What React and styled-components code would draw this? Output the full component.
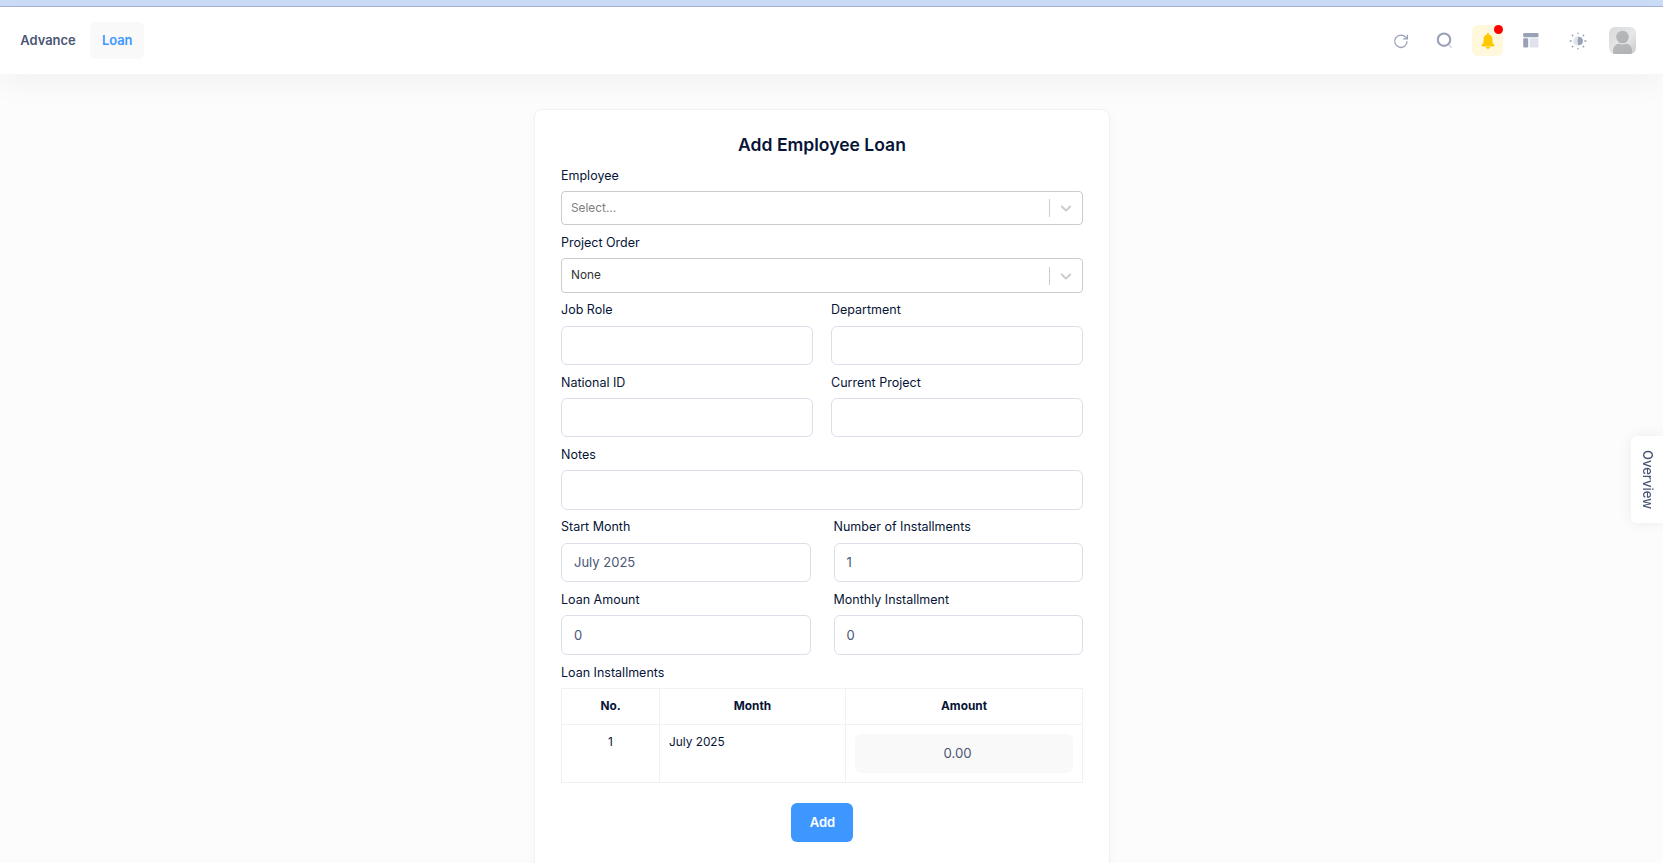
import React from "react";
import styled, { createGlobalStyle } from "styled-components";

const Global = createGlobalStyle`
  *, *::before, *::after { box-sizing: border-box; }
  html, body { margin: 0; height: 100%; overflow: hidden; }
  body {
    background: #fcfcfc;
    color: #071437;
    font-family: Inter, "Liberation Sans", sans-serif;
    font-size: 13px;
  }
  #root { height: 100%; }
`;

const Page = styled.div`
  display: flex;
  flex-direction: column;
  height: 100vh;
  overflow: hidden;
`;

const WindowEdge = styled.div`
  flex: none;
  height: 7px;
  background: #cbdcf6;
  border-bottom: 1px solid #a5b3d2;
`;

const Header = styled.header`
  flex: none;
  display: flex;
  align-items: center;
  justify-content: space-between;
  height: 67px;
  padding: 0 27px 0 6px;
  background: #fff;
  box-shadow: 0 10px 30px rgba(0, 0, 0, 0.045);
`;

const Nav = styled.nav`
  display: flex;
  gap: 2.8px;
  padding-left: 2.6px;
`;

const NavLink = styled.a`
  display: flex;
  align-items: center;
  height: 37px;
  padding: 0 11.7px 1px;
  border-radius: 6px;
  background: ${(p) => (p.$active ? "#f9f9f9" : "transparent")};
  color: ${(p) => (p.$active ? "#3e97ff" : "#4b5675")};
  font-size: 12.95px;
  font-weight: 600;
`;

const Tools = styled.div`
  display: flex;
  align-items: center;
`;

const Tool = styled.div`
  position: relative;
  display: flex;
  align-items: center;
  justify-content: center;
  width: 31px;
  height: 31px;
  margin-right: ${(p) => p.$gap}px;
  border-radius: 6px;
  background: ${(p) => (p.$highlight ? "#fff8dd" : "transparent")};
`;

const AlertDot = styled.span`
  position: absolute;
  top: 0;
  right: 0;
  width: 9px;
  height: 9px;
  border-radius: 50%;
  background: #f00;
`;

const Avatar = styled.svg`
  display: block;
  width: 27px;
  height: 27px;
  border-radius: 6px;
`;

const Main = styled.main`
  flex: 1;
  display: flex;
  justify-content: center;
  align-items: flex-start;
  padding: 35px 19px 0 0;
`;

const Card = styled.form`
  flex: none;
  width: 576px;
  height: 760px;
  padding: 20px 26px;
  border: 1px solid #f1f1f2;
  border-radius: 8px;
  background: #fff;
  box-shadow: 0 3px 12px rgba(0, 0, 0, 0.03);
`;

const Title = styled.h1`
  margin: 0;
  height: 28.1px;
  font-size: 17.55px;
  font-weight: 600;
  line-height: 30px;
  text-align: center;
`;

const Row = styled.div`
  display: grid;
  grid-template-columns: 1fr 1fr;
  column-gap: ${(p) => p.$gap}px;
`;

const Label = styled.label`
  display: block;
  height: 33px;
  padding-top: 0.6px;
  line-height: 34px;
  font-size: 12.5px;
  font-weight: 400;
`;

const SelectBox = styled.div`
  display: flex;
  align-items: center;
  height: 34.35px;
  padding-left: 9px;
  border: 1px solid #ccc;
  border-radius: 4px;
  color: ${(p) => (p.$placeholder ? "#808080" : "#333")};
  font-size: 11.85px;
`;

const SelectText = styled.span`
  flex: 1;
  margin-top: -1.5px;
`;

const Divider = styled.span`
  width: 1px;
  height: 18px;
  background: #ccc;
`;

const ChevronIcon = styled.svg`
  display: block;
  width: 18px;
  height: 18px;
  margin: 0 7px;
  fill: #ccc;
`;

const Input = styled.div`
  display: flex;
  align-items: center;
  height: ${(p) => p.$height || 39.3}px;
  padding: 0 12px;
  border: 1px solid #dbdfe9;
  border-radius: 6px;
  color: #4b5675;
  font-size: 13px;
`;

const Table = styled.table`
  width: 522px;
  border-collapse: collapse;
  table-layout: fixed;
  font-size: 11.85px;
`;

const Th = styled.th`
  height: 36px;
  padding: 0;
  border: 1px solid #f1f1f2;
  width: ${(p) => p.$width};
  font-weight: 700;
  text-align: center;
`;

const Td = styled.td`
  height: 58px;
  padding: 9px;
  border: 1px solid #f1f1f2;
  line-height: 16px;
  text-align: ${(p) => p.$align || "left"};
  vertical-align: top;
`;

const Amount = styled.div`
  height: 39px;
  padding-right: 13px;
  border-radius: 6px;
  background: #f9f9f9;
  color: #4b5675;
  font-size: 13.2px;
  line-height: 39px;
  text-align: center;
`;

const Actions = styled.div`
  display: flex;
  justify-content: center;
  padding-top: 20px;
`;

const AddButton = styled.button`
  width: 62px;
  height: 39px;
  padding: 0 0 0 1px;
  border: 0;
  border-radius: 6px;
  background: #3e97ff;
  color: #fff;
  font: 600 13px Inter, "Liberation Sans", sans-serif;
`;

const OverviewTab = styled.aside`
  position: fixed;
  right: 0;
  top: 436px;
  display: flex;
  align-items: center;
  justify-content: center;
  width: 32px;
  height: 87px;
  padding: 1px 0 0 1px;
  border-radius: 6px 0 0 6px;
  background: #fff;
  box-shadow: 0 0 14px rgba(0, 0, 0, 0.07);
  color: #4b5675;
  font-size: 13px;
  font-weight: 500;
  writing-mode: vertical-rl;
`;

function RefreshIcon() {
  return (
    <svg width="16" height="16" viewBox="0 0 16 16" fill="none" stroke="#99a1b7" strokeWidth="1.3">
      <path d="M14.1 8.3A6.2 6.2 0 1 1 12.6 4.2L14 5.5" />
      <path d="M14.4 1.7V5.9H10.1" />
    </svg>
  );
}

function SearchIcon() {
  return (
    <svg width="17" height="17" viewBox="0 0 17 17" fill="none">
      <path d="M13.2 13.2L15.4 15.4" stroke="#dcdfe8" strokeWidth="2" strokeLinecap="round" />
      <circle cx="8" cy="7.7" r="6.2" stroke="#99a1b7" strokeWidth="2.1" />
    </svg>
  );
}

function BellIcon() {
  return (
    <svg width="14" height="16" viewBox="0 0 14 16" fill="#ffc700">
      <path d="M7 0C7.7 0 8.1.5 8.1 1.1V1.7C10.3 2.2 11.4 3.9 11.4 6V8.5C11.4 10 12.4 10.6 13.1 11.8C13.7 12.8 13.3 13.5 12.4 13.5H1.6C.7 13.5.3 12.8.9 11.8C1.6 10.6 2.6 10 2.6 8.5V6C2.6 3.9 3.7 2.2 5.9 1.7V1.1C5.9.5 6.3 0 7 0Z" />
      <path d="M4.9 14H9.1C8.8 15.1 8 15.9 7 15.9S5.2 15.1 4.9 14Z" />
    </svg>
  );
}

function LayoutIcon() {
  return (
    <svg width="16" height="15" viewBox="0 0 16 15">
      <rect x="0.2" y="0" width="15.3" height="4.3" rx="1" fill="#99a1b7" />
      <rect x="0.2" y="5.2" width="5" height="9.4" rx="1" fill="#99a1b7" />
      <rect x="6.7" y="5.2" width="8.8" height="9.4" rx="1" fill="#dfe2ea" />
    </svg>
  );
}

function SunIcon() {
  return (
    <svg width="18" height="18" viewBox="0 0 18 18">
      <circle cx="9" cy="9" r="4.7" fill="#dfe2ea" />
      <path d="M9.2 5.1H10A3.9 3.9 0 0 1 10 12.9H9.2Q8 9 9.2 5.1Z" fill="#99a1b7" />
      <g stroke="#99a1b7" strokeWidth="1.5" strokeLinecap="round">
        <path d="M9 1.2V1.6M9 16.4V16.8M1.2 9H2.1M15.9 9H16.8M3.4 3.4L3.8 3.8M14.2 14.2L14.6 14.6M3.4 14.6L3.8 14.2M14.2 3.8L14.6 3.4" />
      </g>
    </svg>
  );
}

function UserAvatar() {
  return (
    <Avatar viewBox="0 0 27 27">
      <defs>
        <linearGradient id="back" x1="0" y1="0" x2="1" y2="1">
          <stop offset="0" stopColor="#d9dadb" />
          <stop offset="0.55" stopColor="#e6e7e8" />
          <stop offset="1" stopColor="#c9cbcc" />
        </linearGradient>
        <linearGradient id="person" x1="0" y1="0" x2="1" y2="1">
          <stop offset="0" stopColor="#b8b9ba" />
          <stop offset="1" stopColor="#b0b2b3" />
        </linearGradient>
      </defs>
      <rect width="27" height="27" fill="url(#back)" />
      <circle cx="13.5" cy="10" r="6.3" fill="url(#person)" />
      <path d="M4 27V24C4 19.5 7 16.8 10.3 16.8Q13.5 18 16.8 16.8C20.2 16.8 23 19.5 23 24V27Z" fill="url(#person)" />
    </Avatar>
  );
}

function Select({ label, value, placeholder }) {
  return (
    <div>
      <Label>{label}</Label>
      <SelectBox $placeholder={placeholder}>
        <SelectText>{value}</SelectText>
        <Divider />
        <ChevronIcon viewBox="0 0 20 20">
          <path d="M4.516 7.548c0.436-0.446 1.043-0.481 1.576 0l3.908 3.747 3.908-3.747c0.533-0.481 1.141-0.446 1.574 0 0.436 0.445 0.408 1.197 0 1.615-0.406 0.418-4.695 4.502-4.695 4.502-0.217 0.223-0.502 0.335-0.787 0.335s-0.57-0.112-0.789-0.335c0 0-4.287-4.084-4.695-4.502s-0.436-1.17 0-1.615z" />
        </ChevronIcon>
      </SelectBox>
    </div>
  );
}

function Field({ label, value, height }) {
  return (
    <div>
      <Label>{label}</Label>
      <Input $height={height}>{value}</Input>
    </div>
  );
}

export default function App() {
  return (
    <Page>
      <Global />
      <WindowEdge />
      <Header>
        <Nav>
          <NavLink>Advance</NavLink>
          <NavLink $active>Loan</NavLink>
        </Nav>
        <Tools>
          <Tool $gap={12}><RefreshIcon /></Tool>
          <Tool $gap={12.5}><SearchIcon /></Tool>
          <Tool $gap={12} $highlight><BellIcon /><AlertDot /></Tool>
          <Tool $gap={16}><LayoutIcon /></Tool>
          <Tool $gap={16}><SunIcon /></Tool>
          <UserAvatar />
        </Tools>
      </Header>
      <Main>
        <Card>
          <Title>Add Employee Loan</Title>
          <Select label="Employee" value="Select..." placeholder />
          <Select label="Project Order" value="None" />
          <Row $gap={18}>
            <Field label="Job Role" />
            <Field label="Department" />
          </Row>
          <Row $gap={18}>
            <Field label="National ID" />
            <Field label="Current Project" />
          </Row>
          <Field label="Notes" />
          <Row $gap={23}>
            <Field label="Start Month" value="July 2025" />
            <Field label="Number of Installments" value="1" />
          </Row>
          <Row $gap={23}>
            <Field label="Loan Amount" value="0" height={40} />
            <Field label="Monthly Installment" value="0" height={40} />
          </Row>
          <Label>Loan Installments</Label>
          <Table>
            <thead>
              <tr>
                <Th $width="98px">No.</Th>
                <Th $width="186px">Month</Th>
                <Th>Amount</Th>
              </tr>
            </thead>
            <tbody>
              <tr>
                <Td $align="center">1</Td>
                <Td>July 2025</Td>
                <Td><Amount>0.00</Amount></Td>
              </tr>
            </tbody>
          </Table>
          <Actions>
            <AddButton type="button">Add</AddButton>
          </Actions>
        </Card>
      </Main>
      <OverviewTab>Overview</OverviewTab>
    </Page>
  );
}
